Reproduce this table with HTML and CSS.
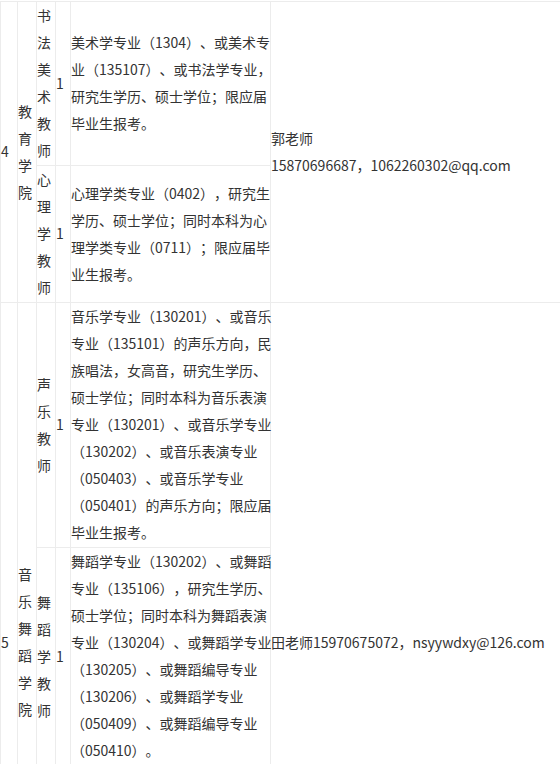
FILE: index.html
```html
<!DOCTYPE html>
<html lang="zh-CN">
<head>
    <meta charset="UTF-8">
    <meta name="viewport" content="width=device-width, initial-scale=1.0">
    <title>招聘岗位</title>
    <link rel="stylesheet" href="styles.css">
</head>
<body>
    <table class="job-table">
        <colgroup>
            <col class="col-no">
            <col class="col-dept">
            <col class="col-post">
            <col class="col-num">
            <col class="col-req">
            <col class="col-contact">
        </colgroup>
        <tbody>
            <tr>
                <td rowspan="2" class="no">4</td>
                <td rowspan="2" class="narrow">教育学院</td>
                <td class="narrow">书法美术教师</td>
                <td class="num">1</td>
                <td class="req">美术学专业（1304）、或美术专<br>业（135107）、或书法学专业，<br>研究生学历、硕士学位；限应届<br>毕业生报考。</td>
                <td rowspan="2" class="contact">郭老师<br>15870696687，1062260302@qq.com</td>
            </tr>
            <tr>
                <td class="narrow">心理学教师</td>
                <td class="num">1</td>
                <td class="req">心理学类专业（0402），研究生<br>学历、硕士学位；同时本科为心<br>理学类专业（0711）；限应届毕<br>业生报考。</td>
            </tr>
            <tr>
                <td rowspan="3" class="no">5</td>
                <td rowspan="3" class="narrow">音乐舞蹈学院</td>
                <td class="narrow">声乐教师</td>
                <td class="num">1</td>
                <td class="req">音乐学专业（130201）、或音乐<br>专业（135101）的声乐方向，民<br>族唱法，女高音，研究生学历、<br>硕士学位；同时本科为音乐表演<br>专业（130201）、或音乐学专业<br>（130202）、或音乐表演专业<br>（050403）、或音乐学专业<br>（050401）的声乐方向；限应届<br>毕业生报考。</td>
                <td rowspan="3" class="contact">田老师15970675072，nsyywdxy@126.com</td>
            </tr>
            <tr>
                <td class="narrow">舞蹈学教师</td>
                <td class="num">1</td>
                <td class="req">舞蹈学专业（130202）、或舞蹈<br>专业（135106），研究生学历、<br>硕士学位；同时本科为舞蹈表演<br>专业（130204）、或舞蹈学专业<br>（130205）、或舞蹈编导专业<br>（130206）、或舞蹈学专业<br>（050409）、或舞蹈编导专业<br>（050410）。</td>
            </tr>
            <tr class="more-row">
                <td class="narrow"></td>
                <td class="num"></td>
                <td class="req"></td>
            </tr>
        </tbody>
    </table>
</body>
</html>
```

FILE: styles.css
```css
html,
body {
    overflow: hidden;
}

body {
    margin: 0;
    padding-top: 1px;
    background-color: #fff;
    color: #333;
    font-family: "Noto Sans CJK SC", "Noto Sans", sans-serif;
    font-size: 14px;
    line-height: 27px;
    text-spacing-trim: space-all;
}

.job-table {
    table-layout: fixed;
    width: 600px;
    border-collapse: collapse;
}

.col-no {
    width: 17px;
}

.col-dept {
    width: 19px;
}

.col-post {
    width: 19px;
}

.col-num {
    width: 15px;
}

.col-req {
    width: 200px;
}

.col-contact {
    width: 330px;
}

.job-table td {
    padding: 0 0 1px;
    border: 1px solid #ececec;
    vertical-align: middle;
    text-align: left;
}

.job-table .narrow {
    word-break: break-all;
}

.job-table .req {
    white-space: nowrap;
}

.job-table .contact {
    white-space: nowrap;
}

.more-row {
    height: 217px;
}
```
